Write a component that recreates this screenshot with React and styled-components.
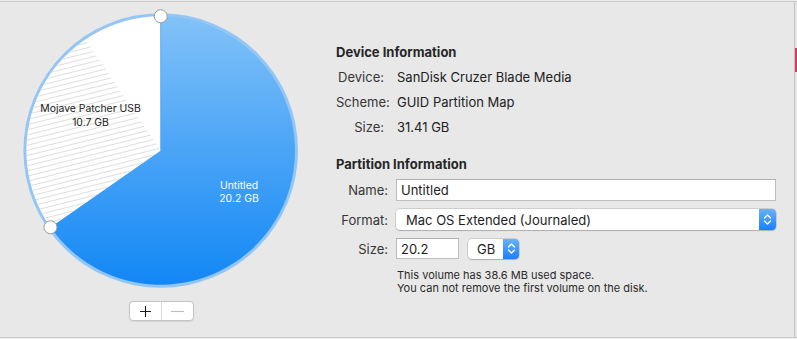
import React from 'react';
import styled, { createGlobalStyle } from 'styled-components';

const Global = createGlobalStyle`
  html, body { margin: 0; padding: 0; background: #ececec; }
  body {
    font-family: Inter, "Noto Sans", "Liberation Sans", sans-serif;
    -webkit-font-smoothing: antialiased;
    color: #222;
  }
`;

const Window = styled.div`
  width: 797px;
  height: 339px;
  box-sizing: border-box;
  padding-top: 1px;
  background: #ececec;
  display: flex;
  flex-direction: column;
  overflow: hidden;
`;

const Pane = styled.div`
  flex: none;
  height: 337px;
  box-sizing: border-box;
  border-top: 1px solid #cbcbcb;
  border-bottom: 1px solid #cbcbcb;
  background: #e8e8e8;
  display: flex;
`;

const LeftColumn = styled.div`
  width: 322px;
  flex: none;
  display: flex;
  flex-direction: column;
  align-items: center;
`;

const PieSvg = styled.svg`
  display: block;
  width: 322px;
  height: 290px;
`;

const Segmented = styled.div`
  margin-top: 9px;
  width: 65px;
  height: 20px;
  box-sizing: border-box;
  display: flex;
  background: #fff;
  border: 1px solid #c4c4c4;
  border-radius: 4px;
  box-shadow: 0 0.5px 1px rgba(0, 0, 0, 0.08);
`;

const SegButton = styled.div`
  flex: 1;
  display: flex;
  align-items: center;
  justify-content: center;
  border-left: ${(p) => (p.$divider ? '1px solid #dadada' : 'none')};
  color: ${(p) => (p.$disabled ? '#bdbdbd' : '#1a1a1a')};
`;

const RightColumn = styled.div`
  flex: 1;
  box-sizing: border-box;
  padding: 42px 0 0 14px;
  display: flex;
  flex-direction: column;
`;

const EdgeStrip = styled.div`
  width: 2px;
  flex: none;
  border-left: 1px solid #c2c2c2;
  background: #e6e6e6;
  display: flex;
  flex-direction: column;
`;

const EdgeMark = styled.div`
  margin-top: 46px;
  height: 24px;
  background: #d8396b;
`;

const Heading = styled.div`
  font-size: 13px;
  font-weight: 700;
  line-height: 16px;
  color: #262626;
  margin-top: ${(p) => p.$top || 0}px;
`;

const InfoGrid = styled.div`
  margin-top: 4.5px;
  display: grid;
  grid-template-columns: 48px auto;
  column-gap: 13px;
  grid-auto-rows: 25px;
  align-items: center;
  font-size: 13px;
`;

const Label = styled.div`
  text-align: right;
  color: #363636;
  white-space: nowrap;
  font-size: 13px;
`;

const Value = styled.div`
  color: #222;
  white-space: nowrap;
`;

const FormGrid = styled.div`
  margin-top: 7.7px;
  display: grid;
  grid-template-columns: 52px auto;
  column-gap: 8px;
  row-gap: 8px;
  align-items: center;
`;

const TextField = styled.div`
  width: ${(p) => p.$w}px;
  height: ${(p) => p.$h || 22}px;
  box-sizing: border-box;
  background: #fff;
  border: 1px solid #bdbdbd;
  border-top-color: #b0b0b0;
  padding-left: 4px;
  display: flex;
  align-items: center;
  font-size: 13px;
  color: #1e1e1e;
`;

const Popup = styled.div`
  width: ${(p) => p.$w}px;
  height: ${(p) => p.$h}px;
  box-sizing: border-box;
  background: #fff;
  border-radius: 4px;
  box-shadow: 0 0 0 0.5px rgba(0, 0, 0, 0.22), 0 1px 1px rgba(0, 0, 0, 0.16);
  display: flex;
  align-items: center;
  font-size: 13px;
  color: #1e1e1e;
`;

const PopupText = styled.div`
  flex: 1;
  padding-left: ${(p) => p.$pad}px;
  white-space: nowrap;
`;

const Stepper = styled.div`
  width: ${(p) => p.$w}px;
  height: 100%;
  border-radius: 0 4px 4px 0;
  background: linear-gradient(#69b1fb, #1c7ffb);
  display: flex;
  align-items: center;
  justify-content: center;
`;

const SizeRow = styled.div`
  display: flex;
  align-items: center;
  gap: 9px;
`;

const Note = styled.div`
  margin-top: 9.5px;
  margin-left: 61px;
  font-size: 11px;
  line-height: 13px;
  color: #2a2a2a;
`;

const Chevrons = () => (
  <svg width="9" height="13" viewBox="0 0 9 13">
    <path d="M1.5 5 L4.5 2 L7.5 5" fill="none" stroke="#fff" strokeWidth="1.3" strokeLinecap="round" strokeLinejoin="round" />
    <path d="M1.5 8 L4.5 11 L7.5 8" fill="none" stroke="#fff" strokeWidth="1.3" strokeLinecap="round" strokeLinejoin="round" />
  </svg>
);

const PlusIcon = () => (
  <svg width="11" height="11" viewBox="0 0 11 11">
    <path d="M5.5 0 V11 M0 5.5 H11" stroke="currentColor" strokeWidth="1.1" />
  </svg>
);

const MinusIcon = () => (
  <svg width="13" height="11" viewBox="0 0 13 11">
    <path d="M0 5.5 H13" stroke="currentColor" strokeWidth="1.1" />
  </svg>
);

const CX = 160.7;
const CY = 150.5;
const R = 134.3;
const pt = (deg) => {
  const a = (deg * Math.PI) / 180;
  return [CX + R * Math.cos(a), CY + R * Math.sin(a)];
};

function Pie() {
  const top = pt(-90);
  const end = pt(145.15);
  const hatchEnd = pt(235.8);
  const blue = `M${CX} ${CY} L${top[0]} ${top[1]} A${R} ${R} 0 1 1 ${end[0]} ${end[1]} Z`;
  const white = `M${CX} ${CY} L${end[0]} ${end[1]} A${R} ${R} 0 0 1 ${top[0]} ${top[1]} Z`;
  const hatch = `M${CX} ${CY} L${end[0]} ${end[1]} A${R} ${R} 0 0 1 ${hatchEnd[0]} ${hatchEnd[1]} Z`;
  return (
    <PieSvg viewBox="0 2 322 290">
      <defs>
        <linearGradient id="blueGrad" x1="0" y1="16" x2="0" y2="285" gradientUnits="userSpaceOnUse">
          <stop offset="0" stopColor="#82c2f8" />
          <stop offset="1" stopColor="#1287f5" />
        </linearGradient>
        <pattern id="hatchPat" patternUnits="userSpaceOnUse" width="40" height="5" patternTransform="rotate(-14)">
          <line x1="0" y1="2.5" x2="40" y2="2.5" stroke="#dedede" strokeWidth="1" />
        </pattern>
      </defs>
      <circle cx={CX} cy={CY} r={137.3} fill="#93c6f4" />
      <path d={blue} fill="url(#blueGrad)" />
      <path d={white} fill="#ffffff" />
      <path d={hatch} fill="url(#hatchPat)" />
      <line x1={CX} y1={top[1]} x2={CX} y2={CY} stroke="#4a9ef0" strokeWidth="0.8" />
      <g fontFamily="Inter, 'Noto Sans', sans-serif" fontSize="10.4" textAnchor="middle">
        <text x="90.5" y="112" fill="#222">Mojave Patcher USB</text>
        <text x="90.5" y="126" fill="#222">10.7 GB</text>
        <text x="239" y="189" fill="#fff">Untitled</text>
        <text x="239" y="202" fill="#fff">20.2 GB</text>
      </g>
      <circle cx={top[0]} cy={top[1]} r="6.5" fill="#fff" stroke="#9c9c9c" strokeWidth="1" />
      <circle cx={end[0]} cy={end[1]} r="6.5" fill="#fff" stroke="#9c9c9c" strokeWidth="1" />
    </PieSvg>
  );
}

export default function App() {
  return (
    <Window>
      <Global />
      <Pane>
        <LeftColumn>
          <Pie />
          <Segmented>
            <SegButton><PlusIcon /></SegButton>
            <SegButton $divider $disabled><MinusIcon /></SegButton>
          </Segmented>
        </LeftColumn>
        <RightColumn>
          <Heading>Device Information</Heading>
          <InfoGrid>
            <Label>Device:</Label>
            <Value>SanDisk Cruzer Blade Media</Value>
            <Label>Scheme:</Label>
            <Value>GUID Partition Map</Value>
            <Label>Size:</Label>
            <Value>31.41 GB</Value>
          </InfoGrid>
          <Heading $top={16}>Partition Information</Heading>
          <FormGrid>
            <Label>Name:</Label>
            <TextField $w={380} $h={22}>Untitled</TextField>
            <Label>Format:</Label>
            <Popup $w={380} $h={21}>
              <PopupText $pad={10}>Mac OS Extended (Journaled)</PopupText>
              <Stepper $w={17}><Chevrons /></Stepper>
            </Popup>
            <Label>Size:</Label>
            <SizeRow>
              <TextField $w={63} $h={21}>20.2</TextField>
              <Popup $w={51} $h={20}>
                <PopupText $pad={9}>GB</PopupText>
                <Stepper $w={16}><Chevrons /></Stepper>
              </Popup>
            </SizeRow>
          </FormGrid>
          <Note>
            This volume has 38.6 MB used space.<br />
            You can not remove the first volume on the disk.
          </Note>
        </RightColumn>
        <EdgeStrip>
          <EdgeMark />
        </EdgeStrip>
      </Pane>
    </Window>
  );
}
